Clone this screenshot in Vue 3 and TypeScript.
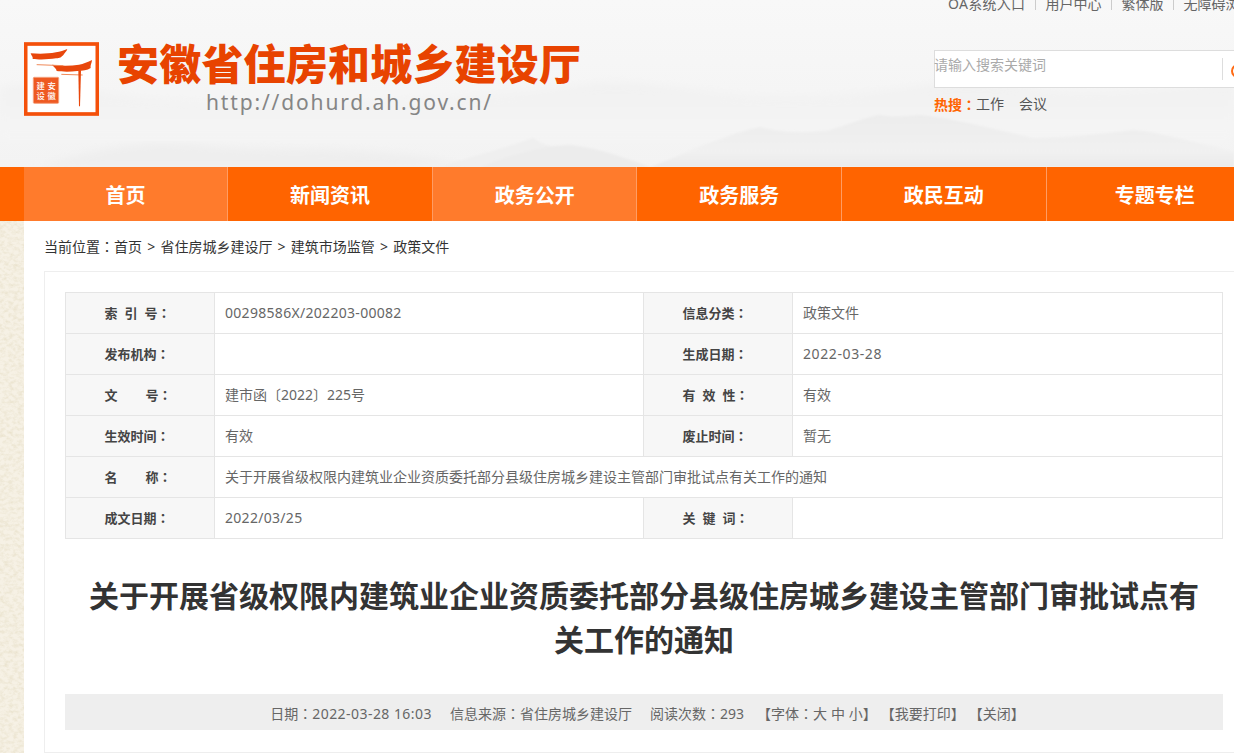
<script setup lang="ts">
interface Cell { label: string; value: string; kind?: 'num' | 'date' }
const rows: Cell[][] = [
  [{ label: '索 引 号', value: '00298586X/202203-00082', kind: 'num' }, { label: '信息分类', value: '政策文件' }],
  [{ label: '发布机构', value: '' }, { label: '生成日期', value: '2022-03-28', kind: 'date' }],
  [{ label: '文    号', value: '建市函〔2022〕225号' }, { label: '有 效 性', value: '有效' }],
  [{ label: '生效时间', value: '有效' }, { label: '废止时间', value: '暂无' }],
  [{ label: '名    称', value: '' }],
  [{ label: '成文日期', value: '2022/03/25', kind: 'num' }, { label: '关 键 词', value: '' }],
]
const docTitle = '关于开展省级权限内建筑业企业资质委托部分县级住房城乡建设主管部门审批试点有关工作的通知'
const nav = [
  { text: '首页', active: true },
  { text: '新闻资讯', active: false },
  { text: '政务公开', active: true },
  { text: '政务服务', active: false },
  { text: '政民互动', active: false },
  { text: '专题专栏', active: false },
]
const topLinks = ['OA系统入口', '用户中心', '繁体版', '无障碍浏览']
const crumbs = ['首页', '省住房城乡建设厅', '建筑市场监管', '政策文件']
</script>

<template>
  <div class="page">
    <svg class="paper" width="24" height="532" aria-hidden="true">
      <defs>
        <filter id="mottle" x="0" y="0" width="100%" height="100%">
          <feTurbulence type="fractalNoise" baseFrequency="0.22 0.3" numOctaves="3" seed="7" />
          <feColorMatrix values="0 0 0 0 0.80  0 0 0 0 0.74  0 0 0 0 0.58  1.6 0 0 0 -0.62" />
        </filter>
      </defs>
      <rect width="24" height="532" filter="url(#mottle)" />
    </svg>

    <header class="header">
      <svg class="hills" viewBox="0 0 1234 167" preserveAspectRatio="none" aria-hidden="true">
        <defs>
          <filter id="soft"><feGaussianBlur stdDeviation="1.2" /></filter>
          <filter id="softer"><feGaussianBlur stdDeviation="4" /></filter>
          <linearGradient id="ridge" x1="0" y1="0" x2="0" y2="1">
            <stop offset="0" stop-color="#ececec" />
            <stop offset="0.7" stop-color="#f1f1f1" />
            <stop offset="1" stop-color="#eaeaea" />
          </linearGradient>
          <linearGradient id="far" x1="0" y1="0" x2="0" y2="1">
            <stop offset="0" stop-color="#f1f1f1" />
            <stop offset="1" stop-color="#f5f5f5" />
          </linearGradient>
        </defs>
        <path filter="url(#softer)" fill="url(#far)" d="M0 88 C40 82 70 86 110 94 C160 100 220 104 300 104 C400 100 520 96 590 84 C640 78 690 92 760 96 C830 98 880 92 934 84 C970 78 1010 82 1040 90 C1100 96 1180 88 1234 84 L1234 140 L0 140 Z" />
        <path filter="url(#soft)" fill="url(#ridge)" d="M650 167 C670 160 690 150 703 145 C720 140 735 132 760 127 C780 132 800 134 830 130 C850 124 870 116 880 115 C895 118 905 116 920 115 C950 118 990 128 1033 138 C1065 138 1100 134 1133 130 C1160 132 1190 142 1217 147 L1234 152 L1234 167 Z" />
        <path filter="url(#soft)" fill="#efefef" d="M440 167 C470 156 500 150 533 138 C540 142 545 146 560 148 C590 152 610 160 640 167 Z" />
        <path filter="url(#soft)" fill="#ececec" d="M480 167 C510 155 540 146 570 145 C600 148 625 158 650 167 Z" />
        <path filter="url(#softer)" fill="#eeeeee" d="M40 167 C90 150 140 138 210 146 C270 152 320 146 400 154 C430 158 450 162 470 167 Z" />
      </svg>

      <div class="top-links">
        <template v-for="(link, i) in topLinks" :key="link">
          <span v-if="i > 0" class="top-sep"></span>
          <a class="top-link">{{ link }}</a>
        </template>
      </div>

      <div class="brand-row">
        <svg class="logo" viewBox="0 0 225 220" aria-label="安徽建设">
          <rect x="5" y="5" width="215" height="210" fill="#fff" stroke="#f4500a" stroke-width="11" />
          <path fill="#e8470c" d="M20 33 C45 35 70 35 96 30 C108 28 120 24 130 20 C128 27 122 32 118 38 C112 44 108 48 96 48 C72 52 44 52 26 50 C28 45 22 40 20 33 Z" />
          <path fill="#e8470c" d="M84 67 C110 71 140 71 165 67 C178 65 192 59 204 53 C204 62 198 68 200 77 C190 84 176 86 160 86 C136 89 112 88 98 86 C98 79 90 74 84 67 Z" />
          <path fill="none" stroke="#f08a5a" stroke-width="3" d="M38 67 L118 70 M112 96 L176 98" />
          <path fill="#e8470c" d="M163 84 L171 84 L168 192 L165 192 Z" />
          <rect x="28" y="105" width="76" height="78" rx="3" fill="#ee5a22" stroke="#f5a27d" stroke-width="3" />
          <text class="seal" x="83" y="139" text-anchor="middle">安</text>
          <text class="seal" x="83" y="170" text-anchor="middle">徽</text>
          <text class="seal" x="50" y="139" text-anchor="middle">建</text>
          <text class="seal" x="50" y="170" text-anchor="middle">设</text>
        </svg>
        <div class="brand-text">
          <h1 class="brand-title">安徽省住房和城乡建设厅</h1>
          <div class="brand-url">http://dohurd.ah.gov.cn/</div>
        </div>
        <div class="search-col">
          <div class="search-box">
            <input class="search-input" placeholder="请输入搜索关键词" />
            <span class="search-sep"></span>
            <span class="search-icon"></span>
          </div>
          <div class="hot">
            <span class="hot-label">热搜<span class="cl">：</span></span>
            <a class="hot-item">工作</a>
            <a class="hot-item">会议</a>
          </div>
        </div>
      </div>
    </header>

    <nav class="nav">
      <a v-for="item in nav" :key="item.text" class="nav-item" :class="{ active: item.active }">{{ item.text }}</a>
    </nav>

    <main class="main">
      <div class="crumbs">
        <span>当前位置<span class="cl">：</span></span>
        <template v-for="(c, i) in crumbs" :key="c">
          <span v-if="i > 0" class="crumb-sep">&gt;</span>
          <a>{{ c }}</a>
        </template>
      </div>

      <section class="box">
        <table class="meta">
          <colgroup>
            <col class="c-label" /><col class="c-value" /><col class="c-label" /><col />
          </colgroup>
          <tbody>
            <tr v-for="(row, i) in rows" :key="i">
              <template v-if="row.length === 1">
                <th>{{ row[0].label }}<span class="cl">：</span></th>
                <td colspan="3">{{ docTitle }}</td>
              </template>
              <template v-else>
                <template v-for="cell in row" :key="cell.label">
                  <th>{{ cell.label }}<span class="cl">：</span></th>
                  <td :class="cell.kind">{{ cell.value }}</td>
                </template>
              </template>
            </tr>
          </tbody>
        </table>

        <h2 class="title">{{ docTitle }}</h2>

        <div class="info">
          <span>日期<span class="cl">：</span><span class="stamp">2022-03-28 16:03</span></span>
          <span>信息来源<span class="cl">：</span>省住房城乡建设厅</span>
          <span>阅读次数<span class="cl">：</span>293</span>
          <span class="tools">【字体<span class="cl">：</span>大 中 小】 【我要打印】 【关闭】</span>
        </div>
      </section>
    </main>
  </div>
</template>

<style scoped>
.page {
  position: relative;
  width: 1234px;
  height: 753px;
  overflow: hidden;
  font-family: "Noto Sans", "Noto Sans CJK SC", sans-serif;
  font-size: 14px;
  color: #333;
  background: #f6f1e5;
  text-spacing-trim: space-all;
}
.paper {
  position: absolute;
  left: 0;
  top: 221px;
}
.cl {
  font-family: "Noto Sans CJK TC", sans-serif;
}

.header {
  position: relative;
  height: 167px;
  background: linear-gradient(#f8f8f8, #f5f5f5 55%, #f3f3f3);
  overflow: hidden;
}
.hills {
  position: absolute;
  inset: 0;
  width: 100%;
  height: 100%;
}
.top-links {
  position: relative;
  display: flex;
  align-items: center;
  width: 1300px;
  height: 14px;
  margin-top: -3px;
  padding-left: 948px;
  box-sizing: border-box;
  color: #666;
  line-height: 14px;
  white-space: nowrap;
}
.top-link { color: #666; }
.top-link:first-child { letter-spacing: 0.3px; }
.top-sep {
  width: 1px;
  height: 11px;
  margin: 0 9.5px;
  background: #ccc;
}

.brand-row {
  position: relative;
  display: flex;
  align-items: flex-start;
  padding: 31px 0 0 24px;
}
.logo {
  flex: none;
  width: 75px;
  height: 74px;
}
.brand-text {
  flex: none;
  width: 817px;
  margin-left: 18px;
}
.brand-title {
  margin: -4px 0 0;
  font-family: "Noto Sans CJK SC", sans-serif;
  font-size: 42px;
  font-weight: 900;
  line-height: 48px;
  letter-spacing: 0.2px;
  color: #e84300;
  white-space: nowrap;
}
.brand-url {
  margin: 3px 0 0 89px;
  font-size: 21px;
  line-height: 26px;
  letter-spacing: 1.85px;
  color: #858585;
  white-space: nowrap;
}
.search-col {
  flex: none;
  width: 330px;
  margin-top: 8px;
  margin-right: -400px;
}
.search-box {
  display: flex;
  align-items: flex-start;
  width: 330px;
  height: 38px;
  box-sizing: border-box;
  background: #fff;
  border: 1px solid #ddd;
}
.search-input {
  flex: none;
  width: 288px;
  height: 27px;
  margin: 0 0 0 -1px;
  padding: 0;
  border: 0;
  outline: 0;
  background: transparent;
  font: inherit;
  color: #333;
}
.search-input::placeholder { color: #aaa; opacity: 1; }
.search-sep {
  flex: none;
  width: 1px;
  height: 22px;
  margin-top: 7px;
  background: #ddd;
}
.search-icon {
  flex: none;
  width: 10px;
  height: 10px;
  margin: 13px 0 0 8px;
  border: 2px solid #ff6a13;
  border-radius: 50%;
}
.hot {
  display: flex;
  margin-top: 7px;
  line-height: 18px;
  color: #555;
}
.hot-label { color: #ff6400; font-weight: 700; }
.hot-item { margin-right: 15px; }

.nav {
  position: relative;
  display: flex;
  height: 54px;
  padding-left: 23.7px;
  background: #ff6400;
}
.nav-item {
  flex: none;
  width: 204.6px;
  box-sizing: border-box;
  border-right: 1px solid #ff9c63;
  color: #fff;
  font-size: 20px;
  font-weight: 700;
  line-height: 57px;
  text-align: center;
  white-space: nowrap;
}
.nav-item:last-child { width: 216px; border-right: 0; }
.nav-item.active { background: #ff7b2c; }

.main {
  position: relative;
  width: 1240px;
  height: 532px;
  margin-left: 24px;
  padding: 0 0 0 20px;
  box-sizing: border-box;
  background: #fff;
}
.crumbs {
  display: flex;
  align-items: center;
  height: 50px;
  color: #333;
  white-space: nowrap;
}
.crumb-sep { margin: 0 5.2px; }

.box {
  width: 1200px;
  height: 482px;
  box-sizing: border-box;
  padding: 20px 20px 0;
  border: 1px solid #eee;
}
.meta {
  width: 1158px;
  table-layout: fixed;
  border-collapse: collapse;
}
.c-label { width: 149px; }
.c-value { width: 429px; }
.meta th, .meta td {
  height: 41px;
  box-sizing: border-box;
  padding: 0;
  border: 1px solid #e5e5e5;
  line-height: 20px;
}
.meta th {
  padding-left: 38.5px;
  background: #f7f7f7;
  color: #444;
  font-size: 13px;
  font-weight: 700;
  text-align: left;
  white-space: pre;
  word-spacing: 3.6px;
}
.meta td {
  padding-left: 10px;
  color: #666;
  font-size: 14px;
  white-space: nowrap;
}
.meta td.num { letter-spacing: 0.3px; }
.meta td.date { letter-spacing: 0.6px; }

.title {
  margin: 33px 0 0;
  padding: 0 20px;
  font-family: "Noto Sans CJK SC", sans-serif;
  font-size: 30px;
  font-weight: 700;
  line-height: 44px;
  color: #333;
  text-align: center;
}
.info {
  display: flex;
  justify-content: center;
  gap: 18px;
  height: 36px;
  margin-top: 34px;
  padding-left: 7px;
  background: #eee;
  color: #666;
  font-size: 14px;
  line-height: 38px;
  white-space: nowrap;
}
.stamp { letter-spacing: 0.45px; }
.tools { margin-left: -5px; word-spacing: 0.3px; }
.seal {
  font-family: "Noto Sans CJK SC", sans-serif;
  font-size: 25px;
  font-weight: 500;
  fill: #fff;
}
</style>

<style>
html, body { margin: 0; overflow: hidden; }
</style>
